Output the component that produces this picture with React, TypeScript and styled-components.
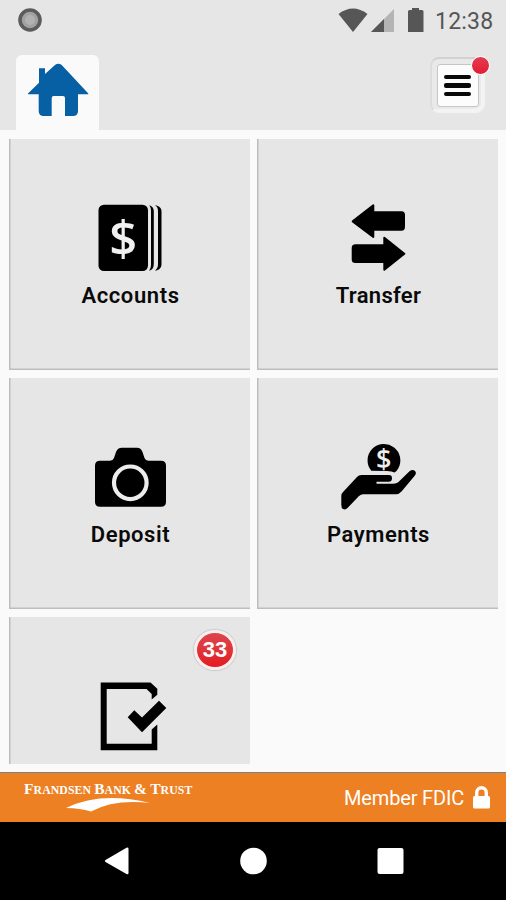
import React from 'react';
import styled, { createGlobalStyle } from 'styled-components';

const GlobalStyle = createGlobalStyle`
  * { box-sizing: border-box; }
  body { margin: 0; background: #fafafa; }
`;

const Screen = styled.div`
  width: 506px;
  height: 900px;
  display: flex;
  flex-direction: column;
  overflow: hidden;
  background: #fafafa;
  font-family: Roboto, sans-serif;
  color: #0a0a0a;
`;

const Header = styled.header`
  height: 130px;
  flex: none;
  background: #e6e6e6;
`;

const StatusBar = styled.div`
  height: 55px;
  padding: 7px 12px 0 17px;
  display: flex;
  align-items: flex-start;
  justify-content: space-between;
  color: #555;
`;

const StatusRight = styled.div`
  display: flex;
  align-items: flex-start;
`;

const Clock = styled.span`
  width: 59px;
  margin-left: 11px;
  font-size: 23px;
  line-height: 30px;
  letter-spacing: 0.2px;
  white-space: nowrap;
`;

const TabBar = styled.div`
  height: 75px;
  padding: 0 21px 0 16px;
  display: flex;
  justify-content: space-between;
`;

const HomeTab = styled.div`
  width: 83px;
  height: 75px;
  border-radius: 6px 6px 0 0;
  background: #fafafa;
`;

const MenuButton = styled.button`
  position: relative;
  width: 55px;
  height: 56px;
  margin-top: 2px;
  padding: 5px;
  border: 2px solid #f3f3f3;
  border-top-color: #d2d2d2;
  border-left-color: #dcdcdc;
  border-radius: 9px;
  background: #e9e9e9;
  box-shadow: inset -2px -2px 1px #f4f4f4;
`;

const MenuFace = styled.span`
  width: 42px;
  height: 43px;
  padding-right: 1px;
  display: flex;
  flex-direction: column;
  align-items: center;
  justify-content: center;
  gap: 4px;
  border: 1px solid #c6c6c6;
  border-radius: 3px;
  background: #fcfcfc;
`;

const MenuLine = styled.span`
  width: 27px;
  height: 4.6px;
  border-radius: 2px;
  background: #080808;
`;

const AlertDot = styled.span`
  position: absolute;
  top: -3px;
  right: -7px;
  width: 19px;
  height: 19px;
  border: 1.5px solid #fff;
  border-radius: 50%;
  background: linear-gradient(#e23c50, #e41d35);
`;

const Tiles = styled.main`
  height: 642px;
  flex: none;
  padding: 9px 8px 8px 9px;
  display: grid;
  grid-template-columns: 241px 241px;
  grid-template-rows: 231px 231px 147px;
  gap: 8px 7px;
`;

const TileCard = styled.section<{ $cut?: boolean }>`
  position: relative;
  padding-top: 65px;
  display: flex;
  flex-direction: column;
  align-items: center;
  background: #e6e6e6;
  box-shadow: inset 1.5px ${p => (p.$cut ? '0' : '-1.5px')} 0 #bdbdbd;
`;

const TileIcon = styled.svg`
  width: 81px;
  height: 70px;
  flex: none;
  overflow: visible;
`;

const TileLabel = styled.span<{ $spacing: number }>`
  margin-top: 8px;
  padding-left: 2px;
  font-size: 22px;
  line-height: 28px;
  font-weight: 600;
  letter-spacing: ${p => p.$spacing}px;
`;

const CountBadge = styled.span`
  position: absolute;
  top: 13px;
  right: 14px;
  width: 42px;
  height: 40px;
  display: flex;
  align-items: center;
  justify-content: center;
  border: 3px solid #f8eeee;
  border-radius: 50%;
  background: linear-gradient(#dc4850, #df343b 50%, #e8151c) border-box;
  box-shadow: 0 0 1px 1px #c9c9c9;
  color: #fff;
  font: bold 22px/1 'Liberation Sans', sans-serif;
`;

const Footer = styled.footer`
  height: 50px;
  flex: none;
  padding: 0 16px 0 24px;
  display: flex;
  justify-content: space-between;
  border-top: 1px solid #6d8494;
  background: #ed8022;
  color: #fff;
`;

const Brand = styled.div`
  width: 169px;
  padding-top: 8px;
  display: flex;
  flex-direction: column;
`;

const BrandName = styled.span`
  height: 16px;
  font: bold 11.8px/16px 'Liberation Serif', serif;
  letter-spacing: 0.08px;
  white-space: nowrap;
`;

const BigCap = styled.span`
  font-size: 15.5px;
`;

const Swoosh = styled.svg`
  width: 84px;
  height: 15px;
  margin: 0 0 0 42px;
`;

const Member = styled.div`
  display: flex;
  align-items: center;
  gap: 9px;
  font-size: 20px;
  letter-spacing: -0.17px;
`;

const NavBar = styled.nav`
  height: 78px;
  flex: none;
  padding: 0 102px 0 104px;
  display: flex;
  align-items: center;
  justify-content: space-between;
  background: #000;
`;

const AccountsIcon = () => (
  <>
    <rect x="9.5" y="0.7" width="49.5" height="66.3" rx="5.5" />
    <path d="M60 1.2C63 1.8 64.8 4 64.8 7V60C64.8 64 63 66.2 60 66.7C62 64 62 62 62 59V8C62 5 62 3.5 60 1.2Z" />
    <path d="M66 1.2C70 1.8 72.5 4 72.5 7V60C72.5 64 70 66.2 66 66.7C69 64 69 62 69 59V8C69 5 69 3.5 66 1.2Z" />
    <text x="34.3" y="52" textAnchor="middle" fontFamily="Open Sans" fontWeight="600" fontSize="49" fill="#f0f0f0">$</text>
  </>
);

const TransferIcon = () => (
  <g stroke="#000" strokeWidth="2" strokeLinejoin="round">
    <path d="M15.7 17.4L36.3 1.4V8.3H64.5Q67 8.3 67 11V23Q67 25.7 64.5 25.7H36.3V33Z" />
    <path d="M67.3 49.7L47.3 33.7V41.3H18.5Q15.7 41.3 15.7 44V55.5Q15.7 58 18.5 58H47.3V65.8Z" />
  </g>
);

const DepositIcon = () => (
  <>
    <path d="M11 17.7H21Q24 17.7 25 15L27 9Q28.5 4.7 33 4.7H48Q52 4.7 53.5 9L55.5 15Q56.5 17.7 59.5 17.7H72Q77 17.7 77 22.5V59Q77 63.7 72 63.7H11Q6 63.7 6 59V22.5Q6 17.7 11 17.7Z" />
    <circle cx="41.3" cy="39.8" r="16.3" fill="none" stroke="#ededed" strokeWidth="4.2" />
  </>
);

const PaymentsIcon = () => (
  <>
    <path d="M34.3 27.8A16.4 16.4 0 1 1 61.2 25.5Q60 28 57.5 29.5Q55 28 50 28Z" />
    <text x="46.8" y="25.8" textAnchor="middle" fontFamily="Open Sans" fontSize="27" fontWeight="600" fill="#ededed">$</text>
    <path d="M4.3 53Q4.3 50.5 6.5 48.5L20 34Q21.6 32 24.5 32H52Q55 32 55 35.2Q55 38.7 51.5 38.7H39.5V40.8H55.5Q60 41 63 37.5L72.5 28.3Q75.5 26 78 28Q80 30 77.5 33L64.5 48.5Q62 51.3 59 51.3H26Q24 51.3 22 53L10.5 65Q8.5 67.2 6 66Q4.3 65 4.3 62Z" />
  </>
);

const TasksIcon = () => (
  <>
    <path d="M11.7 0.5H61.5L68.3 6.8V12.8L62.7 17.5V12L57.5 7H17.7V61.8H62.7V47.5L68.3 42.5V68.3H11.7Z" />
    <path d="M38.7 35.3L45.3 28.3L53 35.5L70 18.8L77.3 26L53 50.3Z" />
  </>
);

interface TileProps {
  label?: string;
  spacing?: number;
  count?: number;
  cut?: boolean;
  children: React.ReactNode;
}

const Tile = ({ label, spacing = 0, count, cut, children }: TileProps) => (
  <TileCard $cut={cut}>
    {count !== undefined && <CountBadge>{count}</CountBadge>}
    <TileIcon viewBox="0 0 81 70">{children}</TileIcon>
    {label && <TileLabel $spacing={spacing}>{label}</TileLabel>}
  </TileCard>
);

export default function App() {
  return (
    <Screen>
      <GlobalStyle />
      <Header>
        <StatusBar>
          <svg width="26" height="26" viewBox="0 0 26 26">
            <circle cx="13" cy="13" r="10" fill="#a2a2a2" stroke="#5c5c5c" strokeWidth="3.6" />
            <circle cx="13" cy="13" r="5" fill="#b2b2b2" />
          </svg>
          <StatusRight>
            <svg width="86" height="28" viewBox="338 7 86 28" fill="#565656">
              <path d="M338.5 14Q353 3 367.5 14L353 32Z" />
              <path d="M394 9V32H371Z" fill="#b4b4b4" />
              <path d="M384 19V32H371Z" />
              <path d="M412 8H419V10H422Q423.5 10 423.5 11.5V32H408V11.5Q408 10 409.5 10H412Z" />
            </svg>
            <Clock>12:38</Clock>
          </StatusRight>
        </StatusBar>
        <TabBar>
          <HomeTab>
            <svg width="83" height="75" viewBox="0 0 83 75" fill="#0860a4">
              <path d="M12 38.5L23 27.7V13.3H29V19L39 10Q42.3 7.5 45.7 10L72.3 38.5V39.3H62V56Q62 61 57 61H49V43Q49 41 47 41H37.7Q35.7 41 35.7 43V61H27.7Q22.7 61 22.7 56V39.3H12Z" />
            </svg>
          </HomeTab>
          <MenuButton>
            <MenuFace>
              <MenuLine />
              <MenuLine />
              <MenuLine />
            </MenuFace>
            <AlertDot />
          </MenuButton>
        </TabBar>
      </Header>
      <Tiles>
        <Tile label="Accounts" spacing={0.6}><AccountsIcon /></Tile>
        <Tile label="Transfer" spacing={0.3}><TransferIcon /></Tile>
        <Tile label="Deposit" spacing={0.55}><DepositIcon /></Tile>
        <Tile label="Payments" spacing={0.55}><PaymentsIcon /></Tile>
        <Tile count={33} cut><TasksIcon /></Tile>
      </Tiles>
      <Footer>
        <Brand>
          <BrandName>
            <BigCap>F</BigCap>RANDSEN <BigCap>B</BigCap>ANK <BigCap>&amp;</BigCap> <BigCap>T</BigCap>RUST
          </BrandName>
          <Swoosh viewBox="0 0 84 15" fill="#fff">
            <path d="M0 11Q35 -6 84 6Q48 2 25 14.5Q14 11 0 11Z" />
          </Swoosh>
        </Brand>
        <Member>
          <span>Member FDIC</span>
          <svg width="17" height="23" viewBox="0 0 17 23" fill="#fff">
            <path d="M3.7 11V6.5A4.8 4.8 0 0 1 13.3 6.5V11" fill="none" stroke="#fff" strokeWidth="3.4" />
            <rect y="10" width="17" height="12.5" rx="1.5" />
          </svg>
        </Member>
      </Footer>
      <NavBar>
        <svg width="26" height="28" viewBox="0 0 26 28" fill="#fff">
          <path d="M1.5 13L22.5 0.8Q24.5 0 24.5 2V26Q24.5 28 22.5 27L1.5 15Q0 14 1.5 13Z" />
        </svg>
        <svg width="27" height="28" viewBox="0 0 27 28" fill="#fff">
          <circle cx="13.5" cy="14" r="13.3" />
        </svg>
        <svg width="27" height="28" viewBox="0 0 27 28" fill="#fff">
          <rect x="0.5" y="1" width="26" height="26" rx="2" />
        </svg>
      </NavBar>
    </Screen>
  );
}
